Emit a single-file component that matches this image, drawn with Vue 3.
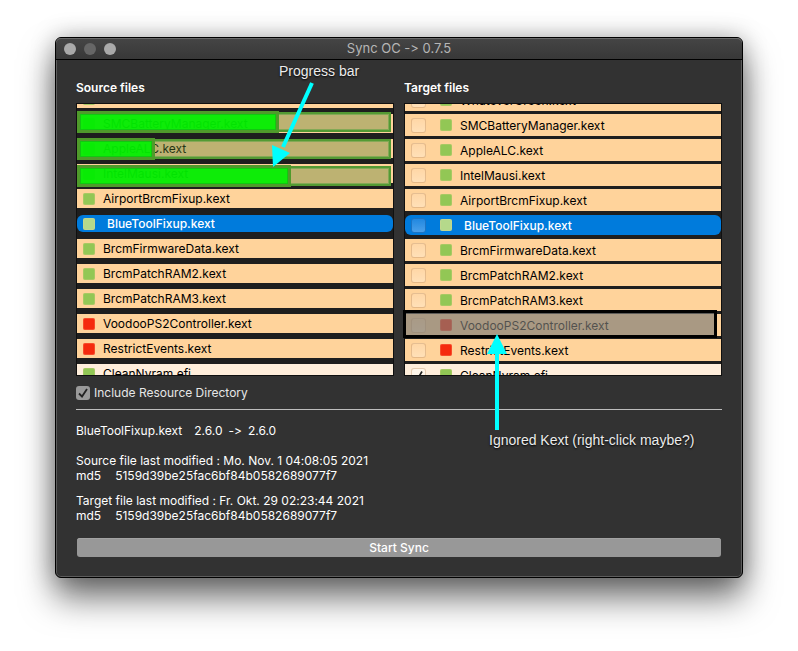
<script setup>
import { onMounted, ref } from 'vue'

const names = [
  ['WhateverGreen.kext', 'ok'],
  ['SMCBatteryManager.kext', 'ok'],
  ['AppleALC.kext', 'ok'],
  ['IntelMausi.kext', 'ok'],
  ['AirportBrcmFixup.kext', 'ok'],
  ['BlueToolFixup.kext', 'ok'],
  ['BrcmFirmwareData.kext', 'ok'],
  ['BrcmPatchRAM2.kext', 'ok'],
  ['BrcmPatchRAM3.kext', 'ok'],
  ['VoodooPS2Controller.kext', 'missing'],
  ['RestrictEvents.kext', 'missing'],
  ['CleanNvram.efi', 'ok'],
]
const makeFiles = () =>
  names.map(([name, state]) => ({
    name,
    state,
    selected: name === 'BlueToolFixup.kext',
    driver: name.endsWith('.efi'),
    checked: name.endsWith('.efi'),
  }))
const files = ref(makeFiles())
const progress = [
  { name: 'SMCBatteryManager.kext', value: 65 },
  { name: 'AppleALC.kext', value: 25 },
  { name: 'IntelMausi.kext', value: 69 },
]
const details = [
  { label: 'Source file last modified : Mo. Nov. 1 04:08:05 2021', md5: '5159d39be25fac6bf84b0582689077f7' },
  { label: 'Target file last modified : Fr. Okt. 29 02:23:44 2021', md5: '5159d39be25fac6bf84b0582689077f7' },
]
const includeResources = ref(true)
const sourceList = ref(null)
const targetList = ref(null)

onMounted(() => {
  sourceList.value.scrollTop = 15
  targetList.value.scrollTop = 15
})
</script>

<template>
  <main class="window">
    <header class="titlebar">
      <div class="lights">
        <button type="button" aria-label="Close"></button>
        <button type="button" aria-label="Minimize" class="dim"></button>
        <button type="button" aria-label="Zoom"></button>
      </div>
      <h1>Sync OC -&gt; 0.7.5</h1>
    </header>

    <div class="body">
      <div class="panels">
        <section class="panel">
          <h2>Source files</h2>
          <div class="frame">
            <ul ref="sourceList" class="list source">
              <li v-for="f in files" :key="f.name" :class="{ selected: f.selected, driver: f.driver }">
                <span class="swatch" :class="f.state"></span>
                <span class="name">{{ f.name }}</span>
              </li>
            </ul>
            <div class="bars">
              <div
                v-for="p in progress"
                :key="p.name"
                class="bar"
                role="progressbar"
                :aria-label="p.name"
                :aria-valuenow="p.value"
              >
                <div class="fill" :style="{ width: p.value + '%' }"></div>
              </div>
            </div>
            <div class="note note-progress">
              <span>Progress bar</span>
              <svg width="44" height="90" viewBox="0 0 44 90" aria-hidden="true">
                <path d="M40 2 L11 66" stroke="#00ffff" stroke-width="4" />
                <path d="M1 86 L0 64 L18 72 Z" fill="#00ffff" />
              </svg>
            </div>
          </div>
        </section>

        <section class="panel">
          <h2>Target files</h2>
          <div class="frame">
            <ul ref="targetList" class="list target">
              <li v-for="f in files" :key="f.name" :class="{ selected: f.selected, driver: f.driver }">
                <label>
                  <input v-model="f.checked" type="checkbox" />
                  <span class="swatch" :class="f.state"></span>
                  <span class="name">{{ f.name }}</span>
                </label>
              </li>
            </ul>
            <div class="ignored"></div>
            <div class="note note-ignored">
              <svg width="20" height="96" viewBox="0 0 20 96" aria-hidden="true">
                <path d="M10 96 V18" stroke="#00ffff" stroke-width="4" />
                <path d="M10 0 L20 20 H0 Z" fill="#00ffff" />
              </svg>
              <span>Ignored Kext (right-click maybe?)</span>
            </div>
          </div>
        </section>
      </div>

      <label class="include">
        <input v-model="includeResources" type="checkbox" />
        Include Resource Directory
      </label>

      <hr />

      <p class="versions">
        <span class="kext">BlueToolFixup.kext</span>
        <span>2.6.0</span>
        <span>-&gt;</span>
        <span>2.6.0</span>
      </p>
      <div v-for="d in details" :key="d.label" class="detail">
        <p>{{ d.label }}</p>
        <p class="hash"><span>md5</span><span>{{ d.md5 }}</span></p>
      </div>

      <button type="button" class="sync">Start Sync</button>
    </div>
  </main>
</template>

<style>
body {
  background: #fff;
}
</style>

<style scoped>
* {
  box-sizing: border-box;
  margin: 0;
  padding: 0;
}

.window {
  margin: 37px 55px 73px;
  border: 1px solid #000;
  border-radius: 6px;
  background: #323232;
  color: #fff;
  font: 400 12px/15px Inter, "Liberation Sans", sans-serif;
  font-feature-settings: "calt" 0;
  -webkit-text-stroke: 0 transparent;
  box-shadow:
    inset 0 0 0 1px #5c5c5c,
    0 20px 34px rgba(0, 0, 0, 0.55),
    0 0 24px rgba(0, 0, 0, 0.28);
}

.titlebar {
  display: grid;
  grid-template-columns: 1fr auto 1fr;
  align-items: center;
  height: 22px;
  padding: 0 8px;
  border-bottom: 1px solid #000;
  border-radius: 5px 5px 0 0;
  background: linear-gradient(#454545, #383838);
  box-shadow: inset 0 1px 0 #6a6a6a;
}

.lights {
  display: flex;
  gap: 8px;
}

.lights button {
  width: 12px;
  height: 12px;
  border: 0;
  border-radius: 50%;
  background: #a9a9a9;
}

.lights .dim {
  background: #666;
}

h1 {
  color: #b6b6b6;
  font-size: 13px;
  font-weight: 400;
}

.body {
  padding: 20px;
}

.panels {
  display: grid;
  grid-template-columns: 1fr 1fr;
  gap: 10px;
}

h2 {
  margin-bottom: 7px;
  font-size: 12px;
  font-weight: 600;
  line-height: 16px;
}

.frame {
  position: relative;
}

.list {
  height: 273px;
  overflow: hidden;
  border: 1px solid #101010;
  background: #1e1e1e;
  color: #000;
  list-style: none;
}

.list li {
  height: 19px;
  margin-bottom: 6px;
  background: #ffd39b;
}

.source li,
.target label {
  display: flex;
  align-items: center;
  gap: 8px;
  padding-left: 6px;
}

.list.target li {
  height: 22px;
  margin-bottom: 3px;
}

.target label {
  height: 100%;
}

.list li.driver {
  background: #ffeedb;
}

.list li.selected {
  height: 17px;
  margin: 7px 0;
  border-radius: 6px;
  background: #007bdc;
  color: #fff;
  font-weight: 500;
}

.list.target li.selected {
  height: 20px;
  margin: 4px 0;
}

.selected .name {
  padding-left: 4px;
}

.swatch {
  width: 12px;
  height: 12px;
  border-radius: 2px;
  background: #92c755;
  box-shadow: inset 0 0 0 1px rgba(255, 211, 155, 0.2);
}

.swatch.missing {
  background: #f52a0e;
}

.selected .swatch {
  background: #b5d98b;
}

input[type="checkbox"] {
  width: 15px;
  height: 15px;
  flex: none;
  appearance: none;
  border: 1px solid rgba(190, 140, 90, 0.4);
  border-radius: 3px;
  background: linear-gradient(#ffd7a6, #ffe0b8);
}

.target input {
  margin-right: 6px;
}

.selected input[type="checkbox"] {
  border-color: #1c74c4;
  background: linear-gradient(#2188e0, #4aa0ea);
}

.driver input[type="checkbox"]:checked {
  background: #fff6ea url("data:image/svg+xml,%3Csvg xmlns='http://www.w3.org/2000/svg' viewBox='0 0 13 13'%3E%3Cpath d='M3 7l2.500 3L10 2.500' fill='none' stroke='%23222' stroke-width='1.700'/%3E%3C/svg%3E");
}

.bars {
  position: absolute;
  top: 9px;
  left: 1px;
  right: 3px;
  display: flex;
  flex-direction: column;
  gap: 7px;
}

.bar {
  height: 20px;
  border: 2px solid #539a34;
  background: rgba(90, 129, 52, 0.4);
  box-shadow: inset 0 0 0 1px #83a956;
}

.fill {
  height: 22px;
  margin: -3px 0 0 -2px;
  border: 3px solid #4f9b2b;
  background: rgba(0, 240, 0, 0.93);
  background-clip: padding-box;
  box-shadow: inset 0 0 0 1px rgba(20, 190, 20, 0.8);
}

.note {
  position: absolute;
  display: flex;
  flex-direction: column;
  align-items: flex-start;
  color: #ececec;
  font: 400 14px/16px "Liberation Sans", Arial, sans-serif;
  text-shadow: 0 1px 2px #000;
  white-space: nowrap;
  pointer-events: none;
}

.note-progress {
  top: -40px;
  left: 203px;
}

.note-progress svg {
  margin: 2px 0 0 -7px;
}

.note-ignored {
  top: 231px;
  left: 83px;
}

.note-ignored span {
  padding: 2px 0 0 2px;
}

.ignored {
  position: absolute;
  top: 207px;
  left: -1px;
  right: 5px;
  height: 28px;
  border: 3px solid #000;
  background: rgba(125, 123, 118, 0.66);
  background-clip: padding-box;
}

.include {
  display: flex;
  align-items: center;
  gap: 4px;
  width: fit-content;
  margin-top: 9px;
  color: #e6e6e6;
}

.include input[type="checkbox"] {
  width: 14px;
  height: 14px;
  border: 0;
  background: #9a9a9a;
}

.include input[type="checkbox"]:checked {
  background: #9a9a9a url("data:image/svg+xml,%3Csvg xmlns='http://www.w3.org/2000/svg' viewBox='0 0 14 14'%3E%3Cpath d='M3 7.500l3 3L11 3' fill='none' stroke='%23222' stroke-width='1.800'/%3E%3C/svg%3E");
}

hr {
  margin-top: 9px;
  border: 0;
  border-top: 1px solid #bdbdbd;
}

.versions {
  display: flex;
  gap: 6px;
  margin: 13px 0 15px;
}

.kext {
  margin-right: 6px;
}

.detail {
  margin-bottom: 10px;
}

.hash {
  display: flex;
  gap: 14px;
}

.sync {
  display: block;
  width: calc(100% - 2px);
  height: 19px;
  margin: 15px 1px 0;
  border: 0;
  border-radius: 3px;
  background: #989898;
  color: #fff;
  font: inherit;
  font-weight: 500;
  box-shadow: inset 0 1px 0 #a3a3a3;
}
</style>
